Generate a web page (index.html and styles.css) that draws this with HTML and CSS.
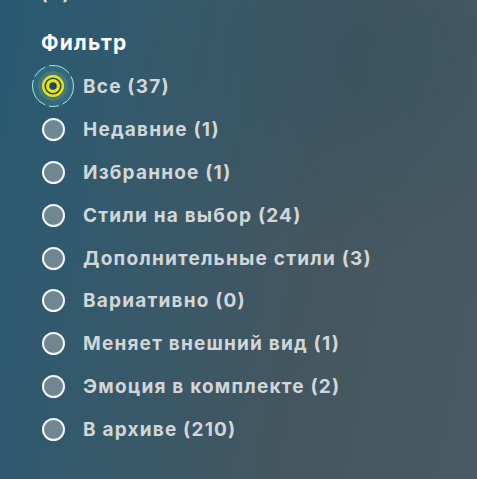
FILE: index.html
```html
<!DOCTYPE html>
<html lang="ru">
<head>
  <meta charset="UTF-8">
  <title>Фильтр</title>
  <link rel="stylesheet" href="styles.css">
</head>
<body>
  <div class="screen">
    <div class="prev-line">Из. (0)</div>

    <!-- Filter group -->
    <div class="filter">
      <div class="filter-title">Фильтр</div>
      <ul class="options">
        <li class="option selected">
          <span class="radio">
            <svg viewBox="0 0 48 48" width="48" height="48">
              <circle cx="24" cy="24" r="21" fill="rgba(110,210,215,0.12)"/>
              <circle cx="24" cy="24" r="15" fill="rgba(200,240,120,0.12)"/>
              <circle cx="24" cy="24" r="20.5" fill="none" stroke="#9fe6ea" stroke-width="1" stroke-dasharray="22 4 10 4 30 4 14 4"/>
              <circle cx="24" cy="24" r="11" fill="#e4e61c"/>
              <circle cx="24" cy="24" r="7.8" fill="none" stroke="#2a4550" stroke-width="1.6"/>
              <circle cx="24" cy="24" r="3.8" fill="#2a4550"/>
            </svg>
          </span>
          <span class="label">Все (37)</span>
        </li>
        <li class="option"><span class="radio"><span class="dot"></span></span><span class="label">Недавние (1)</span></li>
        <li class="option"><span class="radio"><span class="dot"></span></span><span class="label">Избранное (1)</span></li>
        <li class="option"><span class="radio"><span class="dot"></span></span><span class="label">Стили на выбор (24)</span></li>
        <li class="option"><span class="radio"><span class="dot"></span></span><span class="label">Дополнительные стили (3)</span></li>
        <li class="option"><span class="radio"><span class="dot"></span></span><span class="label">Вариативно (0)</span></li>
        <li class="option"><span class="radio"><span class="dot"></span></span><span class="label">Меняет внешний вид (1)</span></li>
        <li class="option"><span class="radio"><span class="dot"></span></span><span class="label">Эмоция в комплекте (2)</span></li>
        <li class="option"><span class="radio"><span class="dot"></span></span><span class="label">В архиве (210)</span></li>
      </ul>
    </div>
  </div>
</body>
</html>
```

FILE: styles.css
```css
html, body {
  margin: 0;
  padding: 0;
}
body {
  font-family: Inter, "Noto Sans", sans-serif;
  width: 477px;
  height: 479px;
  overflow: hidden;
}
.screen {
  width: 477px;
  height: 479px;
  overflow: hidden;
  background:
    radial-gradient(ellipse 260px 200px at 380px 60px, rgba(40,80,100,0.35), transparent),
    linear-gradient(100deg, #285a72 0%, #36596b 30%, #44565f 65%, #4a5a62 100%);
}
.prev-line {
  margin-top: -15px;
  padding-left: 2px;
  height: 18px;
  line-height: 18px;
  font-size: 19px;
  font-weight: 700;
  letter-spacing: 1px;
  color: #d8dcde;
}
.filter {
  padding: 28px 0 0 41px;
}
.filter-title {
  font-size: 21px;
  font-weight: 700;
  letter-spacing: 1.2px;
  color: #ffffff;
  height: 24px;
  line-height: 24px;
  margin-bottom: 10px;
}
.options {
  list-style: none;
  margin: 0;
  padding: 0;
}
.option {
  display: flex;
  align-items: center;
  height: 42.9px;
}
.radio {
  width: 24px;
  height: 24px;
  display: flex;
  align-items: center;
  justify-content: center;
  margin-right: 18px;
  position: relative;
}
.radio svg {
  position: absolute;
  left: -12px;
  top: -12px;
}
.dot {
  width: 19px;
  height: 19px;
  border-radius: 50%;
  border: 2.5px solid #f2f4f5;
  background: #6f8791;
}
.label {
  font-size: 19px;
  font-weight: 700;
  letter-spacing: 1.2px;
  color: #d2d6d8;
}
```
